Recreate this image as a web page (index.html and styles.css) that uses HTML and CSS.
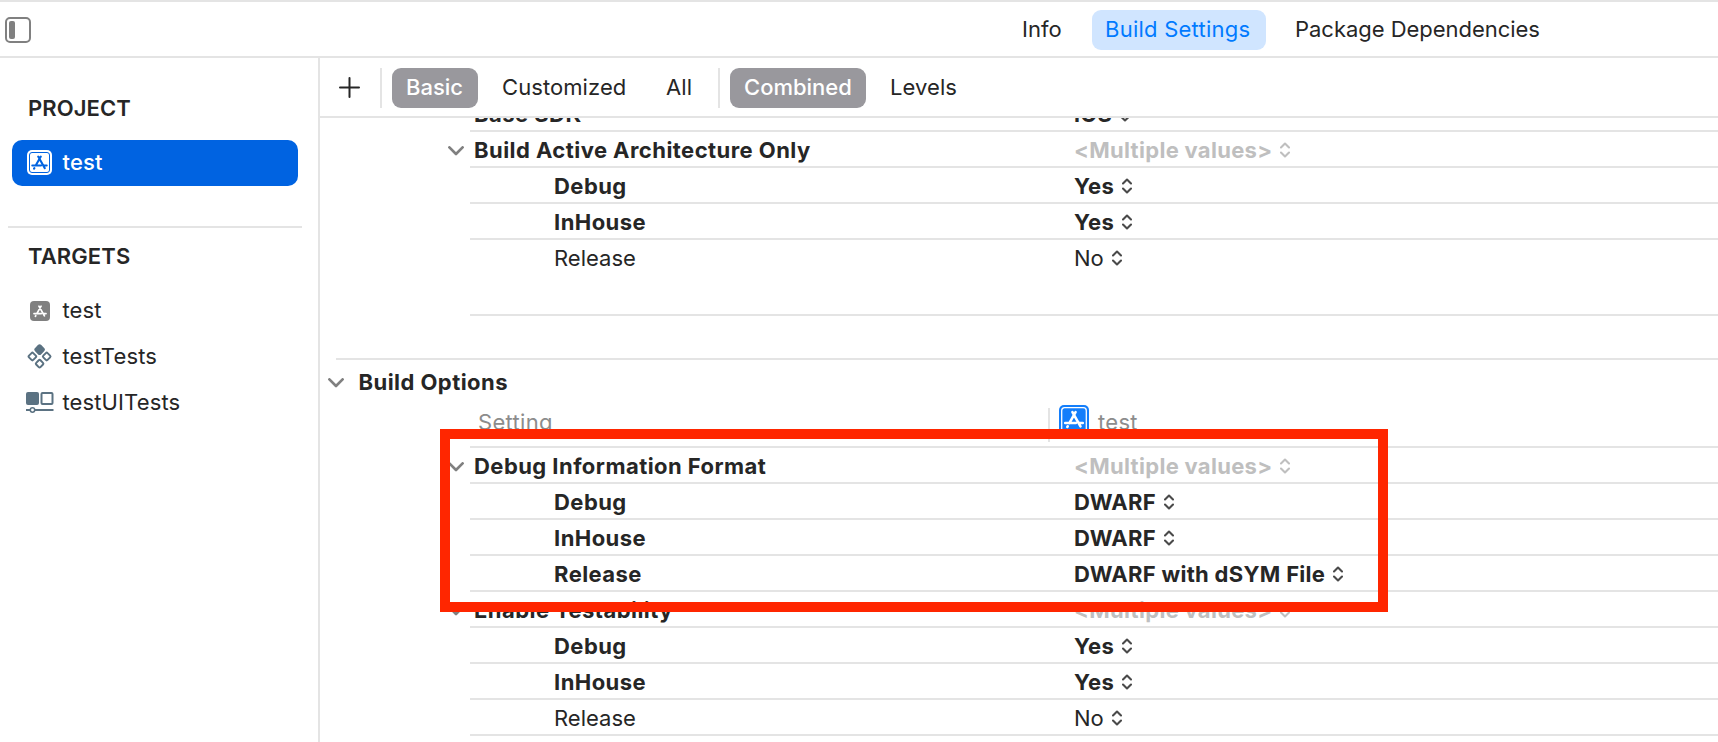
FILE: index.html
```html
<!DOCTYPE html>
<html lang="en">
<head>
<meta charset="utf-8">
<title>Build Settings</title>
<link rel="stylesheet" href="styles.css">
</head>
<body>
<svg class="defs" aria-hidden="true">
  <symbol id="chevron" viewBox="0 0 16 10"><path d="M1.4 1.4 8 8l6.600-6.600" fill="none" stroke="currentColor" stroke-width="2.700" stroke-linecap="round" stroke-linejoin="round"/></symbol>
  <symbol id="updown" viewBox="0 0 10 16"><path d="M1 5.400 5 1.500 9 5.400M1 10.600 5 14.500 9 10.600" fill="none" stroke="currentColor" stroke-width="2.100" stroke-linecap="round" stroke-linejoin="round"/></symbol>
  <symbol id="appmark" viewBox="0 0 18 18"><path d="M10.300 2.600 5.200 11.500M7.700 2.600 14.300 14.200M1.800 11.500H10.500M13.600 11.500H16.200M3.900 14.100 3.500 14.700" fill="none" stroke="currentColor" stroke-width="2.100" stroke-linecap="round"/></symbol>
</svg>
<header class="topbar">
  <svg class="panel-icon" viewBox="0 0 26 26"><rect x="1" y="1" width="24" height="24" rx="4" fill="none" stroke="#808080" stroke-width="2"/><rect x="4" y="4" width="6" height="18" rx="2" fill="#808080"/></svg>
  <nav class="tabs">
    <span class="tab tab-info">Info</span>
    <span class="tab tab-active">Build Settings</span>
    <span class="tab tab-pkg">Package Dependencies</span>
  </nav>
</header>
<div class="body">
  <aside class="sidebar">
    <h2 class="side-title">PROJECT</h2>
    <div class="item selected">
      <svg class="item-icon" viewBox="0 0 26 26"><rect x="0" y="0" width="25" height="25" rx="5" fill="#fff"/><rect x="2.500" y="2.500" width="20" height="20" rx="2.500" fill="none" stroke="#0063e1" stroke-width="1"/><use href="#appmark" x="3.500" y="4" width="18" height="18" color="#0063e1"/></svg>
      <span>test</span>
    </div>
    <div class="divider"></div>
    <h2 class="side-title targets">TARGETS</h2>
    <div class="item">
      <svg class="item-icon" viewBox="0 0 26 26"><rect x="3" y="3" width="20" height="20" rx="4" fill="#808080"/><use href="#appmark" x="5.500" y="6" width="15" height="15" color="#fff"/></svg>
      <span>test</span>
    </div>
    <div class="item">
      <svg class="item-icon" viewBox="0 0 26 26"><g fill="none" stroke="#5b7282" stroke-width="2"><rect x="-3.400" y="-3.400" width="6.800" height="6.800" rx="1.400" transform="translate(12.600 5.600) rotate(45)" fill="#5b7282"/><rect x="-3" y="-3" width="6" height="6" rx="1.200" transform="translate(5.400 12.500) rotate(45)"/><rect x="-3" y="-3" width="6" height="6" rx="1.200" transform="translate(19.700 12.500) rotate(45)"/><rect x="-3" y="-3" width="6" height="6" rx="1.200" transform="translate(12.600 19.700) rotate(45)"/></g></svg>
      <span>testTests</span>
    </div>
    <div class="item">
      <svg class="item-icon wide" viewBox="0 0 28 26"><rect x="0" y="2" width="13" height="13" rx="2" fill="#5b7282"/><g fill="none" stroke="#5b7282" stroke-width="2"><rect x="15.500" y="3" width="11" height="11" rx="1"/><path d="M0 20H4.500M9 20H27.500"/><circle cx="6.500" cy="20" r="2.200" stroke-width="1.500"/></g></svg>
      <span>testUITests</span>
    </div>
  </aside>
  <main class="main">
    <div class="toolbar">
      <svg class="plus" viewBox="0 0 22 22"><path d="M1 10.500H20M10.500 1V20" stroke="#262626" stroke-width="2" stroke-linecap="round"/></svg>
      <span class="sep"></span>
      <span class="pill basic">Basic</span>
      <span class="opt customized">Customized</span>
      <span class="opt all">All</span>
      <span class="sep sep-two"></span>
      <span class="pill combined">Combined</span>
      <span class="opt levels">Levels</span>
    </div>
    <div class="settings">
      <div class="row head clipped"><span class="name">Base SDK</span><span class="value">iOS<svg class="ud"><use href="#updown"/></svg></span></div>
      <div class="row head"><svg class="chev"><use href="#chevron"/></svg><span class="name">Build Active Architecture Only</span><span class="value multi">&lt;Multiple values&gt;<svg class="ud"><use href="#updown"/></svg></span></div>
      <div class="row"><span class="name">Debug</span><span class="value">Yes<svg class="ud"><use href="#updown"/></svg></span></div>
      <div class="row"><span class="name">InHouse</span><span class="value">Yes<svg class="ud"><use href="#updown"/></svg></span></div>
      <div class="row plain tall"><span class="name">Release</span><span class="value">No<svg class="ud"><use href="#updown"/></svg></span></div>
      <section class="group">
        <div class="group-title"><svg class="chev"><use href="#chevron"/></svg><span>Build Options</span></div>
        <div class="columns">
          <span class="col-setting">Setting</span>
          <span class="col-target"><svg class="app" viewBox="0 0 30 30"><rect width="30" height="30" rx="5" fill="#147efb"/><rect x="2.700" y="2.700" width="24.600" height="24.600" rx="3" fill="none" stroke="#fff" stroke-width="1.300"/><use href="#appmark" x="4" y="4" width="22" height="22" color="#fff"/></svg><span>test</span></span>
        </div>
        <div class="row head"><svg class="chev"><use href="#chevron"/></svg><span class="name">Debug Information Format</span><span class="value multi">&lt;Multiple values&gt;<svg class="ud"><use href="#updown"/></svg></span></div>
        <div class="row"><span class="name">Debug</span><span class="value">DWARF<svg class="ud"><use href="#updown"/></svg></span></div>
        <div class="row"><span class="name">InHouse</span><span class="value">DWARF<svg class="ud"><use href="#updown"/></svg></span></div>
        <div class="row"><span class="name">Release</span><span class="value">DWARF with dSYM File<svg class="ud"><use href="#updown"/></svg></span></div>
        <div class="row head"><svg class="chev"><use href="#chevron"/></svg><span class="name">Enable Testability</span><span class="value multi">&lt;Multiple values&gt;<svg class="ud"><use href="#updown"/></svg></span></div>
        <div class="row"><span class="name">Debug</span><span class="value">Yes<svg class="ud"><use href="#updown"/></svg></span></div>
        <div class="row"><span class="name">InHouse</span><span class="value">Yes<svg class="ud"><use href="#updown"/></svg></span></div>
        <div class="row plain"><span class="name">Release</span><span class="value">No<svg class="ud"><use href="#updown"/></svg></span></div>
      </section>
    </div>
  </main>
</div>
<div class="highlight"></div>
</body>
</html>
```
FILE: styles.css
```css
* { box-sizing: border-box; }
body {
  margin: 0;
  width: 1718px;
  height: 742px;
  overflow: hidden;
  position: relative;
  background: #fff;
  color: #262626;
  font: 400 22px/34px Inter, "Liberation Sans", sans-serif;
  white-space: nowrap;
  display: flex;
  flex-direction: column;
}
svg { display: block; flex: none; }
.defs { position: absolute; width: 0; height: 0; }

.topbar {
  height: 58px;
  flex: none;
  border-top: 2px solid #e4e4e4;
  border-bottom: 2px solid #e4e4e4;
  display: flex;
  align-items: center;
}
.panel-icon { width: 26px; height: 26px; margin-left: 5px; margin-top: 2px; }
.tabs { display: flex; flex: none; align-items: center; margin: 2px 0 0 989px; }
.tab { flex: none; height: 40px; line-height: 39px; }
.tab-info { width: 72px; padding-left: 2px; }
.tab-active { width: 174px; padding-left: 13px; border-radius: 9px; background: #d0e5ff; color: #007aff; letter-spacing: 0.24px; }
.tab-pkg { margin-left: 29px; letter-spacing: -0.03px; }

.body { flex: 1; display: flex; min-height: 0; }
.sidebar { width: 320px; flex: none; border-right: 2px solid #e4e4e4; padding: 33px 20px 0 12px; }
.side-title { margin: 0 0 15px 16px; font-size: 22px; line-height: 34px; font-weight: 600; letter-spacing: 0.1px; }
.side-title.targets { margin: 11px 0 15px 16px; }
.item { height: 46px; display: flex; align-items: center; padding-left: 15px; line-height: 42px; }
.item span { margin-left: 9.5px; padding-bottom: 3px; letter-spacing: 0.12px; }
.item-icon { width: 26px; height: 26px; }
.item-icon.wide { width: 28px; margin: 0 -1px; }
.selected { background: #0063e1; color: #fff; border-radius: 10px; font-weight: 500; }
.divider { height: 2px; margin: 40px -4px 0; background: #e4e4e4; }

.main { flex: 1; min-width: 0; display: flex; flex-direction: column; }
.toolbar { height: 60px; flex: none; border-bottom: 2px solid #e4e4e4; display: flex; align-items: center; padding: 2px 0 0 19px; }
.plus { width: 22px; height: 22px; }
.sep { width: 2px; height: 40px; background: #e4e4e4; margin-left: 19px; }
.pill { height: 40px; line-height: 38px; border-radius: 9px; background: #99989d; color: #fff; font-weight: 500; padding-left: 14px; margin-left: 10px; }
.opt { line-height: 38px; height: 40px; letter-spacing: 0.08px; }
.basic { width: 86px; }
.customized { margin-left: 24px; width: 164px; }
.all { width: 52px; }
.sep-two { margin-left: 0; }
.combined { width: 136px; }
.levels { margin-left: 24px; }

.settings { flex: 1; min-height: 0; overflow: hidden; }
.row {
  height: 36px;
  margin-left: 150px;
  padding-top: 1px;
  border-bottom: 2px solid #e4e4e4;
  display: grid;
  grid-template-columns: 604px 1fr;
  font-weight: 700;
  line-height: 34px;
}
.clipped { margin-top: -22px; }
.name { padding-left: 84px; letter-spacing: 0.45px; }
.head .name { padding-left: 4px; grid-column: 1; grid-row: 1; }
.head .value { grid-column: 2; grid-row: 1; }
.row .chev { grid-column: 1; grid-row: 1; margin: 13px 0 0 -22px; }
.chev { width: 16px; height: 10px; color: #808080; }
.value { display: flex; letter-spacing: 0.3px; }
.ud { width: 10px; height: 16px; margin: 9px 0 0 8px; color: #4a4a4a; }
.multi { letter-spacing: 0.3px; }
.multi, .multi .ud { color: #bfbfbf; }
.plain { font-weight: 400; }
.plain .name, .plain .value { letter-spacing: 0; }
.tall { height: 76px; }

.group { margin-top: 42px; }
.group-title { border-top: 2px solid #e4e4e4; margin-left: 16px; height: 50px; display: flex; padding-top: 5px; font-weight: 700; letter-spacing: 0.45px; }
.group-title .chev { margin: 13px 14.5px 0 -8px; }
.columns { height: 40px; border-bottom: 2px solid #e4e4e4; margin-left: 150px; display: grid; grid-template-columns: 578px 1fr; color: #8c8c8c; }
.col-setting { padding-left: 8px; line-height: 28px; letter-spacing: 0.3px; }
.col-target { display: flex; border-left: 2px solid #e4e4e4; height: 34px; padding-left: 9px; line-height: 28px; }
.col-target span { margin-left: 9px; letter-spacing: 0.3px; }
.app { width: 30px; height: 30px; margin-top: -3px; }

.highlight { position: absolute; left: 440px; top: 429px; width: 948px; height: 183px; border: 10px solid #ff2600; }
```
